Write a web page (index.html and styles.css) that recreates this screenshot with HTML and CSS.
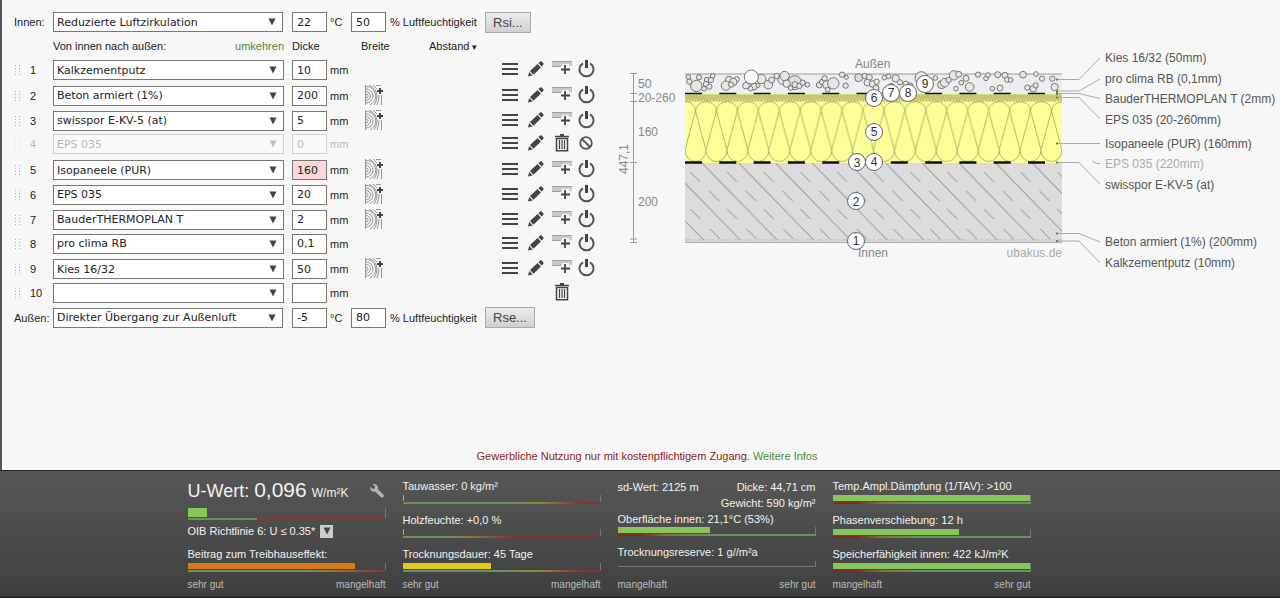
FILE: index.html
```html
<!DOCTYPE html>
<html lang="de">
<head>
<meta charset="utf-8">
<title>U-Wert-Rechner</title>
<link rel="stylesheet" href="styles.css">
</head>
<body>
<svg class="sprite" aria-hidden="true">
  <symbol id="i-grip" viewBox="0 0 8 12"><g fill="#aaa"><path d="M1 1h1v1H1zM1 4h1v1H1zM1 7h1v1H1zM1 10h1v1H1zM5 1h1v1H5zM5 4h1v1H5zM5 7h1v1H5zM5 10h1v1H5z"/></g></symbol>
  <symbol id="i-arrow" viewBox="0 0 8 8"><path d="M.5 .5h7L4 7.5z" fill="#444"/></symbol>
  <symbol id="i-wood" viewBox="0 0 18 20"><g fill="none" stroke="#8a8a8a" stroke-width=".9"><path d="M.5 0v20"/><circle cx="1" cy="11" r="2"/><path d="M1 6.500a4.500 4.500 0 0 1 0 9M1 4a7 7 0 0 1 0 14M1 1.500a9.500 9.500 0 0 1 6 17L5 20M4 0q8 4 8 11 0 5-3 9M8 0l4 4M14 10q0 6-2 10M16.500 10v10M11 .5h5"/></g><path d="M14 3h2v2h2v2h-2v2h-2V7h-2V5h2z" fill="#444"/></symbol>
  <symbol id="i-menu" viewBox="0 0 16 16"><path d="M0 2h16v2H0zM0 7h16v2H0zM0 12h16v2H0z" fill="#444"/></symbol>
  <symbol id="i-pencil" viewBox="0 0 16 16"><path d="M0 15.500l1.200-4.600 3.500 3.500zM2 10l7.500-7 3.400 3.400-7.400 7.300zM10.400 2.200l1.800-1.700Q13 0 13.700.6l1.600 1.600q.7.8 0 1.500l-1.600 1.700z" fill="#444"/></symbol>
  <symbol id="i-add" viewBox="0 0 20 18"><path d="M0 1h20v5h-3V4h-7v2H0z" fill="#c8c8c8"/><path d="M0 1.500h20M0 6.500h9" stroke="#a0a0a0" fill="none"/><path d="M13 5v9M9 9.500h9" stroke="#444" stroke-width="1.800"/></symbol>
  <symbol id="i-power" viewBox="0 0 16 18"><path d="M4.500 3.300a7 7 0 1 0 7 0" fill="none" stroke="#555" stroke-width="2"/><path d="M6.500 0h3v8h-3z" fill="#444"/></symbol>
  <symbol id="i-trash" viewBox="0 0 14 18"><g fill="none" stroke="#444"><path d="M0 2.500h14" stroke-width="1.500"/><path d="M5 1h4" stroke-width="2"/><path d="M1.500 4.500h11v12.300h-11z" stroke-width="1.500"/><path d="M4.500 6v9M7 6v9M9.500 6v9" stroke-width="1.200"/></g></symbol>
  <symbol id="i-block" viewBox="0 0 14 14"><g fill="none" stroke="#555" stroke-width="1.800"><circle cx="7" cy="7" r="5.800"/><path d="M3 3l8 8"/></g></symbol>
</svg>

<main class="main">
  <div class="workspace">
    <form class="editor">
      <div class="climate">
        <label class="climate-name" for="in-mode">Innen:</label>
        <span class="pick"><select id="in-mode"><option>Reduzierte Luftzirkulation</option></select><svg class="arrow"><use href="#i-arrow"/></svg></span>
        <input class="num" id="in-t" value="22" aria-label="Temperatur innen"><label class="unit-c" for="in-t">°C</label>
        <input class="num" id="in-h" value="50"><label class="unit-h" for="in-h">% Luftfeuchtigkeit</label>
        <button type="button" class="btn">Rsi...</button>
      </div>
      <div class="heads">
        <span class="h-name">Von innen nach außen: <a href="#umkehren">umkehren</a></span>
        <span class="h-thick">Dicke</span><span class="h-width">Breite</span><span class="h-dist">Abstand <small>▾</small></span>
      </div>
      <div class="layers">
        <div class="layer"><span class="lead"><svg class="grip"><use href="#i-grip"/></svg>1</span><span class="pick"><select aria-label="Schicht 1"><option>Kalkzementputz</option></select><svg class="arrow"><use href="#i-arrow"/></svg></span><input class="num" id="d1" value="10"><label for="d1">mm</label>
          <button type="button" class="ic c-menu" aria-label="Menü"><svg><use href="#i-menu"/></svg></button><button type="button" class="ic c-pen" aria-label="Bearbeiten"><svg><use href="#i-pencil"/></svg></button><button type="button" class="ic c-add" aria-label="Einfügen"><svg><use href="#i-add"/></svg></button><button type="button" class="ic c-pow" aria-label="Ein/Aus"><svg><use href="#i-power"/></svg></button></div>
        <div class="layer"><span class="lead"><svg class="grip"><use href="#i-grip"/></svg>2</span><span class="pick"><select aria-label="Schicht 2"><option>Beton armiert (1%)</option></select><svg class="arrow"><use href="#i-arrow"/></svg></span><input class="num" id="d2" value="200"><label for="d2">mm</label><button type="button" class="ic c-wood" aria-label="Balken"><svg><use href="#i-wood"/></svg></button>
          <button type="button" class="ic c-menu" aria-label="Menü"><svg><use href="#i-menu"/></svg></button><button type="button" class="ic c-pen" aria-label="Bearbeiten"><svg><use href="#i-pencil"/></svg></button><button type="button" class="ic c-add" aria-label="Einfügen"><svg><use href="#i-add"/></svg></button><button type="button" class="ic c-pow" aria-label="Ein/Aus"><svg><use href="#i-power"/></svg></button></div>
        <div class="layer"><span class="lead"><svg class="grip"><use href="#i-grip"/></svg>3</span><span class="pick"><select aria-label="Schicht 3"><option>swisspor E-KV-5 (at)</option></select><svg class="arrow"><use href="#i-arrow"/></svg></span><input class="num" id="d3" value="5"><label for="d3">mm</label><button type="button" class="ic c-wood" aria-label="Balken"><svg><use href="#i-wood"/></svg></button>
          <button type="button" class="ic c-menu" aria-label="Menü"><svg><use href="#i-menu"/></svg></button><button type="button" class="ic c-pen" aria-label="Bearbeiten"><svg><use href="#i-pencil"/></svg></button><button type="button" class="ic c-add" aria-label="Einfügen"><svg><use href="#i-add"/></svg></button><button type="button" class="ic c-pow" aria-label="Ein/Aus"><svg><use href="#i-power"/></svg></button></div>
        <div class="layer off"><span class="lead"><svg class="grip"><use href="#i-grip"/></svg>4</span><span class="pick"><select aria-label="Schicht 4"><option>EPS 035</option></select><svg class="arrow"><use href="#i-arrow"/></svg></span><input class="num" id="d4" value="0"><label for="d4">mm</label>
          <button type="button" class="ic c-menu" aria-label="Menü"><svg><use href="#i-menu"/></svg></button><button type="button" class="ic c-pen" aria-label="Bearbeiten"><svg><use href="#i-pencil"/></svg></button><button type="button" class="ic c-trash" aria-label="Löschen"><svg><use href="#i-trash"/></svg></button><button type="button" class="ic c-block" aria-label="Ein/Aus"><svg><use href="#i-block"/></svg></button></div>
        <div class="layer"><span class="lead"><svg class="grip"><use href="#i-grip"/></svg>5</span><span class="pick"><select aria-label="Schicht 5"><option>Isopaneele (PUR)</option></select><svg class="arrow"><use href="#i-arrow"/></svg></span><input class="num warn" id="d5" value="160"><label for="d5">mm</label><button type="button" class="ic c-wood" aria-label="Balken"><svg><use href="#i-wood"/></svg></button>
          <button type="button" class="ic c-menu" aria-label="Menü"><svg><use href="#i-menu"/></svg></button><button type="button" class="ic c-pen" aria-label="Bearbeiten"><svg><use href="#i-pencil"/></svg></button><button type="button" class="ic c-add" aria-label="Einfügen"><svg><use href="#i-add"/></svg></button><button type="button" class="ic c-pow" aria-label="Ein/Aus"><svg><use href="#i-power"/></svg></button></div>
        <div class="layer"><span class="lead"><svg class="grip"><use href="#i-grip"/></svg>6</span><span class="pick"><select aria-label="Schicht 6"><option>EPS 035</option></select><svg class="arrow"><use href="#i-arrow"/></svg></span><input class="num" id="d6" value="20"><label for="d6">mm</label><button type="button" class="ic c-wood" aria-label="Balken"><svg><use href="#i-wood"/></svg></button>
          <button type="button" class="ic c-menu" aria-label="Menü"><svg><use href="#i-menu"/></svg></button><button type="button" class="ic c-pen" aria-label="Bearbeiten"><svg><use href="#i-pencil"/></svg></button><button type="button" class="ic c-add" aria-label="Einfügen"><svg><use href="#i-add"/></svg></button><button type="button" class="ic c-pow" aria-label="Ein/Aus"><svg><use href="#i-power"/></svg></button></div>
        <div class="layer"><span class="lead"><svg class="grip"><use href="#i-grip"/></svg>7</span><span class="pick"><select aria-label="Schicht 7"><option>BauderTHERMOPLAN T</option></select><svg class="arrow"><use href="#i-arrow"/></svg></span><input class="num" id="d7" value="2"><label for="d7">mm</label><button type="button" class="ic c-wood" aria-label="Balken"><svg><use href="#i-wood"/></svg></button>
          <button type="button" class="ic c-menu" aria-label="Menü"><svg><use href="#i-menu"/></svg></button><button type="button" class="ic c-pen" aria-label="Bearbeiten"><svg><use href="#i-pencil"/></svg></button><button type="button" class="ic c-add" aria-label="Einfügen"><svg><use href="#i-add"/></svg></button><button type="button" class="ic c-pow" aria-label="Ein/Aus"><svg><use href="#i-power"/></svg></button></div>
        <div class="layer"><span class="lead"><svg class="grip"><use href="#i-grip"/></svg>8</span><span class="pick"><select aria-label="Schicht 8"><option>pro clima RB</option></select><svg class="arrow"><use href="#i-arrow"/></svg></span><input class="num" id="d8" value="0,1"><label for="d8">mm</label>
          <button type="button" class="ic c-menu" aria-label="Menü"><svg><use href="#i-menu"/></svg></button><button type="button" class="ic c-pen" aria-label="Bearbeiten"><svg><use href="#i-pencil"/></svg></button><button type="button" class="ic c-add" aria-label="Einfügen"><svg><use href="#i-add"/></svg></button><button type="button" class="ic c-pow" aria-label="Ein/Aus"><svg><use href="#i-power"/></svg></button></div>
        <div class="layer"><span class="lead"><svg class="grip"><use href="#i-grip"/></svg>9</span><span class="pick"><select aria-label="Schicht 9"><option>Kies 16/32</option></select><svg class="arrow"><use href="#i-arrow"/></svg></span><input class="num" id="d9" value="50"><label for="d9">mm</label><button type="button" class="ic c-wood" aria-label="Balken"><svg><use href="#i-wood"/></svg></button>
          <button type="button" class="ic c-menu" aria-label="Menü"><svg><use href="#i-menu"/></svg></button><button type="button" class="ic c-pen" aria-label="Bearbeiten"><svg><use href="#i-pencil"/></svg></button><button type="button" class="ic c-add" aria-label="Einfügen"><svg><use href="#i-add"/></svg></button><button type="button" class="ic c-pow" aria-label="Ein/Aus"><svg><use href="#i-power"/></svg></button></div>
        <div class="layer"><span class="lead"><svg class="grip"><use href="#i-grip"/></svg>10</span><span class="pick"><select aria-label="Schicht 10"><option></option></select><svg class="arrow"><use href="#i-arrow"/></svg></span><input class="num" id="d10" value=""><label for="d10">mm</label>
          <button type="button" class="ic c-trash" aria-label="Löschen"><svg><use href="#i-trash"/></svg></button></div>
        <div class="climate">
          <label class="climate-name" for="out-mode">Außen:</label>
          <span class="pick"><select id="out-mode"><option>Direkter Übergang zur Außenluft</option></select><svg class="arrow"><use href="#i-arrow"/></svg></span>
          <input class="num" id="out-t" value="-5" aria-label="Temperatur außen"><label class="unit-c" for="out-t">°C</label>
          <input class="num" id="out-h" value="80"><label class="unit-h" for="out-h">% Luftfeuchtigkeit</label>
          <button type="button" class="btn">Rse...</button>
        </div>
      </div>
    </form>

    <svg class="section" viewBox="614 50 666 230" role="img" aria-label="Schichtaufbau">
      <defs>
        <pattern id="p-fine" patternUnits="userSpaceOnUse" x="685" y="94" width="3" height="8"><path d="M0 7.500L.8 .5L1.500 7.500L2.300 .5L3 7.500" fill="none" stroke="#a5a555" stroke-width=".5"/></pattern>
        <pattern id="p-wool" patternUnits="userSpaceOnUse" x="685" y="101" width="20.944" height="62"><g fill="none" stroke="#a3a35a" stroke-width=".8"><path d="M0 49L10.470 10L20.944 49A10.470 11.500 0 0 1 0 49M-10.470 10A10.470 9.500 0 0 1 10.470 10A10.470 9.500 0 0 1 31.400 10"/></g></pattern>
        <pattern id="p-conc" patternUnits="userSpaceOnUse" x="685" y="163" width="36.700" height="78"><g stroke="#999" stroke-width="1"><path d="M17 0L93 78M-19.700 0L56.300 78M-56.400 0L19.600 78M-93.100 0L-17 78"/><path d="M5.300 9L15.300 19M24.300 28L34.300 38M5.300 46L15.300 56M25 66L35 76"/></g></pattern>
      </defs>
      <g font-family="Liberation Sans, Arial, sans-serif" font-size="12" fill="#888">
        <text x="855" y="68">Außen</text>
        <rect x="685" y="74" width="377" height="20" fill="#eee"/>
        <path d="M685 74H1062" stroke="#999"/>
        <g transform="translate(680 64) scale(.33333)" fill="#e6e6e6" stroke="#666" stroke-width="2.600">
          <circle cx="25" cy="39" r="7"/><circle cx="28" cy="53" r="8"/><circle cx="57" cy="40" r="8"/><circle cx="49" cy="66" r="17"/><circle cx="81" cy="48" r="8"/><circle cx="78" cy="60" r="8"/><circle cx="98" cy="36" r="7"/><circle cx="88" cy="68" r="8"/><circle cx="72" cy="74" r="7"/><circle cx="93" cy="48" r="8"/>
          <circle cx="147" cy="48" r="11"/><circle cx="170" cy="46" r="8"/><circle cx="160" cy="54" r="11"/><circle cx="138" cy="65" r="14"/><circle cx="153" cy="62" r="8"/><circle cx="198" cy="65" r="10"/><circle cx="222" cy="68" r="10"/><circle cx="212" cy="74" r="7"/><circle cx="234" cy="64" r="6"/><circle cx="244" cy="45" r="14"/><circle cx="214" cy="39" r="21" fill="#fff"/>
          <circle cx="265" cy="62" r="13"/><circle cx="275" cy="48" r="9"/><circle cx="290" cy="36" r="8"/><circle cx="307" cy="48" r="13"/><circle cx="314" cy="36" r="14"/><circle cx="344" cy="56" r="21" fill="#ddd"/><circle cx="320" cy="59" r="11"/><circle cx="345" cy="62" r="9"/><circle cx="358" cy="66" r="8"/><circle cx="368" cy="56" r="8"/><circle cx="382" cy="62" r="7"/><circle cx="332" cy="72" r="7"/>
          <circle cx="418" cy="63" r="9"/><circle cx="426" cy="54" r="8"/><circle cx="434" cy="43" r="8"/><circle cx="440" cy="62" r="12"/><circle cx="443" cy="77" r="7"/><circle cx="460" cy="58" r="17"/><circle cx="486" cy="32" r="8"/><circle cx="499" cy="40" r="6"/><circle cx="497" cy="65" r="8"/><circle cx="536" cy="41" r="12" fill="#ddd"/><circle cx="554" cy="36" r="8"/><circle cx="568" cy="40" r="9"/><circle cx="562" cy="56" r="10"/><circle cx="578" cy="60" r="10"/><circle cx="590" cy="53" r="8"/><circle cx="588" cy="72" r="9"/><circle cx="613" cy="41" r="7"/><circle cx="626" cy="37" r="7"/><circle cx="647" cy="43" r="11"/><circle cx="634" cy="66" r="8"/><circle cx="660" cy="55" r="8"/><circle cx="678" cy="60" r="9"/><circle cx="690" cy="66" r="9"/><circle cx="724" cy="42" r="19"/>
          <circle cx="766" cy="42" r="7"/><circle cx="785" cy="62" r="12"/><circle cx="794" cy="56" r="13"/><circle cx="806" cy="48" r="8"/><circle cx="822" cy="34" r="14"/><circle cx="836" cy="31" r="9"/><circle cx="828" cy="74" r="7"/><circle cx="844" cy="56" r="7"/><circle cx="858" cy="43" r="9"/><circle cx="869" cy="69" r="13"/><circle cx="894" cy="32" r="8"/><circle cx="918" cy="43" r="7"/><circle cx="924" cy="33" r="7"/><circle cx="937" cy="74" r="7"/><circle cx="960" cy="72" r="9"/><circle cx="953" cy="32" r="9"/><circle cx="975" cy="34" r="9"/><circle cx="982" cy="47" r="8"/><circle cx="992" cy="48" r="7"/><circle cx="1029" cy="32" r="10"/><circle cx="1042" cy="71" r="8"/><circle cx="1060" cy="74" r="10"/><circle cx="1067" cy="64" r="8"/><circle cx="1068" cy="30" r="7"/><circle cx="1086" cy="44" r="8"/><circle cx="1117" cy="44" r="8"/><circle cx="1124" cy="69" r="11"/>
        </g>
        <rect x="685" y="94" width="377" height="69" fill="#ffff99"/>
        <rect x="685" y="94" width="377" height="8" fill="#f0f090"/>
        <rect x="685" y="94" width="377" height="8" fill="url(#p-fine)"/>
        <rect x="685" y="101" width="377" height="62" fill="url(#p-wool)"/>
        <rect x="685" y="163" width="377" height="80" fill="#dcdcdc"/>
        <rect x="685" y="163" width="377" height="77" fill="url(#p-conc)"/>
        <path d="M685 240H1062" stroke="#aaa" stroke-dasharray="6 2 2 2" stroke-width=".7"/>
        <path d="M685 242.500H1062" stroke="#aaa"/>
        <path d="M685 93.500H1062" stroke="#111" stroke-width="1.500" stroke-dasharray="17 17.300"/>
        <path d="M685 162.500H1062" stroke="#111" stroke-width="2.400" stroke-dasharray="17 17.300"/>
        <path d="M633.500 73.500V242M630 73.500H637M630 93.500H637M630 101.500H637M630 162.500H637M630 239H637M630 242.500H637" stroke="#999" fill="none"/>
        <text x="638" y="88">50</text><text x="638" y="102">20-260</text><text x="638" y="136">160</text><text x="638" y="206">200</text>
        <text transform="translate(628 174) rotate(-90)">447,1</text>
        <text x="858" y="257">Innen</text><text x="1062" y="257" text-anchor="end" fill="#aaa">ubakus.de</text>
        <g fill="#fff" stroke="#666"><circle cx="925" cy="84" r="8.500"/><circle cx="908" cy="93" r="8.500"/><circle cx="891" cy="93" r="8.500"/><circle cx="874" cy="98" r="8.500"/><circle cx="874" cy="132" r="8.500"/><circle cx="874" cy="162" r="8.500"/><circle cx="857" cy="162" r="8.500"/><circle cx="856" cy="201" r="8.500"/><circle cx="856" cy="241" r="8.500"/></g>
        <g fill="#333" text-anchor="middle"><text x="925" y="88">9</text><text x="908" y="97">8</text><text x="891" y="97">7</text><text x="874" y="102">6</text><text x="874" y="136">5</text><text x="874" y="166">4</text><text x="857" y="167">3</text><text x="856" y="206">2</text><text x="856" y="245">1</text></g>
        <g fill="none" stroke="#aaa"><path d="M1056 79.500H1079L1100 58M1056 91H1079L1100 79M1056 93.500H1079L1100 98.500M1056 97.500H1079L1100 119M1056 143.500H1100M1056 162.500H1079L1100 184M1056 233.500H1079L1100 242M1056 241H1079L1100 263M1092 161L1097 163.500H1100"/></g>
        <path d="M1056 78.500h2v2h-2zM1056 90h2v5h-2zM1056 96.500h2v2h-2zM1056 142.500h2v2h-2zM1056 161.500h2v2h-2zM1056 232.500h2v2h-2zM1056 240h2v2h-2z" fill="#777"/>
        <g fill="#555"><text x="1105" y="62">Kies 16/32 (50mm)</text><text x="1105" y="83">pro clima RB (0,1mm)</text><text x="1105" y="103">BauderTHERMOPLAN T (2mm)</text><text x="1105" y="124">EPS 035 (20-260mm)</text><text x="1105" y="148">Isopaneele (PUR) (160mm)</text><text x="1105" y="168" fill="#aaa">EPS 035 (220mm)</text><text x="1105" y="189">swisspor E-KV-5 (at)</text><text x="1105" y="246">Beton armiert (1%) (200mm)</text><text x="1105" y="267">Kalkzementputz (10mm)</text></g>
      </g>
    </svg>
  </div>
  <p class="notice">Gewerbliche Nutzung nur mit kostenpflichtigem Zugang. <a href="#infos">Weitere Infos</a></p>
</main>

<footer class="results">
  <section class="col">
    <div class="uvalue"><span class="u-label">U-Wert: <b>0,096</b> <small>W/m²K</small></span><svg class="wrench" viewBox="0 0 14 14"><path d="M.3 2.800L2.600 5l2-.5.5-2L2.800.3Q5.300-.4 7 1.400q1.400 1.500.7 3.600l5.800 5.700q.8 1.300-.2 2.300t-2.400.3L5.200 7.600Q3 8.200 1.400 6.800-.3 5 .3 2.800z" fill="#b5b5b5"/></svg></div>
    <div class="meter tall"><div class="track"><div class="fill green" style="width:10%"></div></div><div class="scale s-u"></div></div>
    <div class="target"><label for="norm">OIB Richtlinie 6: U ≤ 0.35*</label><button type="button" id="norm" class="drop" aria-label="Richtlinie wählen"><svg><use href="#i-arrow"/></svg></button></div>
    <div class="meter"><div class="cap">Beitrag zum Treibhauseffekt:</div><div class="track"><div class="fill orange" style="width:85%"></div></div><div class="scale s-late"></div></div>
    <div class="ends"><span>sehr gut</span><span>mangelhaft</span></div>
  </section>
  <section class="col">
    <div class="meter"><div class="cap">Tauwasser: 0 kg/m²</div><div class="track"><div class="fill green" style="width:1%"></div></div><div class="scale s-mid"></div></div>
    <div class="meter"><div class="cap">Holzfeuchte: +0,0 %</div><div class="track"><div class="fill green" style="width:1%"></div></div><div class="scale s-early"></div></div>
    <div class="meter"><div class="cap">Trocknungsdauer: 45 Tage</div><div class="track"><div class="fill yellow" style="width:45%"></div></div><div class="scale s-mid"></div></div>
    <div class="ends"><span>sehr gut</span><span>mangelhaft</span></div>
  </section>
  <section class="col">
    <div class="facts"><span>sd-Wert: 2125 m</span><span class="right">Dicke: 44,71 cm<br>Gewicht: 590 kg/m²</span></div>
    <div class="meter surface"><div class="cap">Oberfläche innen: 21,1°C (53%)</div><div class="track"><div class="fill green" style="width:47%"></div></div><div class="scale s-rise"></div></div>
    <div class="meter reserve"><div class="cap">Trocknungsreserve: 1 g//m²a</div><div class="track"></div></div>
    <div class="ends"><span>mangelhaft</span><span>sehr gut</span></div>
  </section>
  <section class="col">
    <div class="meter"><div class="cap">Temp.Ampl.Dämpfung (1/TAV): &gt;100</div><div class="track"><div class="fill green" style="width:100%"></div></div><div class="scale s-rise"></div></div>
    <div class="meter"><div class="cap">Phasenverschiebung: 12 h</div><div class="track"><div class="fill green" style="width:64%"></div></div><div class="scale s-rise"></div></div>
    <div class="meter"><div class="cap">Speicherfähigkeit innen: 422 kJ/m²K</div><div class="track"><div class="fill green" style="width:100%"></div></div><div class="scale s-rise"></div></div>
    <div class="ends"><span>mangelhaft</span><span>sehr gut</span></div>
  </section>
</footer>
</body>
</html>
```
FILE: styles.css
```css
* { box-sizing: border-box; }
body {
  margin: 0;
  min-height: 100vh;
  display: flex;
  flex-direction: column;
  background: #f7f7f7;
  color: #222;
  font: 11px/14px "Liberation Sans", Arial, sans-serif;
}
a { color: #4b8b3b; text-decoration: none; }
button { font: inherit; cursor: pointer; }
.sprite { display: none; }

.main {
  flex: 1;
  display: flex;
  flex-direction: column;
  justify-content: space-between;
  border-left: 2px solid #555;
}
.workspace { display: flex; align-items: flex-start; padding: 12px 0 0 12px; }
.editor { flex: none; width: 600px; }
.section { flex: 1; min-width: 0; margin-top: 38px; }

.climate { display: flex; align-items: center; height: 20px; }
.climate-name { width: 39px; white-space: nowrap; }
.climate .pick { width: 230px; margin-right: 9px; }
.unit-c { width: 21px; margin-left: 3px; }
.unit-h { width: 95px; margin-left: 4px; white-space: nowrap; }
.btn {
  height: 21px;
  padding: 0 7px;
  border: 1px solid #aaa;
  background: linear-gradient(#ececec, #d0d0d0);
  color: #444;
  font-size: 13px;
  line-height: 17px;
}

.pick { display: grid; align-items: center; width: 231px; }
.pick > * { grid-area: 1 / 1; }
.arrow { justify-self: end; width: 8px; height: 8px; margin-right: 7px; pointer-events: none; }
select, .num {
  appearance: none;
  height: 20px;
  margin: 0;
  padding: 0 3px;
  border: 1px solid #777;
  border-radius: 0;
  background: #fff;
  color: #222;
  font: 11px "DejaVu Sans", Verdana, sans-serif;
}
select { width: 100%; }
.num { width: 35px; padding: 0 4px; }
.num.warn { background: #fdd8d8; }

.heads { display: flex; margin: 7px 0 6px; padding-left: 39px; }
.h-name { display: flex; justify-content: space-between; width: 231px; margin-right: 8px; }
.h-thick { width: 69px; }
.h-width { width: 68px; }

.layers { display: flex; flex-direction: column; justify-content: space-between; min-height: 268px; }
.layer {
  display: grid;
  grid-template-columns: 39px 239px 38px 35px 137px 26px 24px 26px 17px;
  align-items: center;
  height: 20px;
}
.layer > * { grid-row: 1; }
.lead { display: flex; align-items: center; gap: 8px; }
.grip { width: 8px; height: 12px; }
.ic { padding: 0 0 2px; border: 0; background: none; display: flex; }
.c-wood { grid-column: 5; } .c-wood svg { width: 18px; height: 20px; }
.c-menu { grid-column: 6; } .c-menu svg { width: 16px; height: 16px; }
.c-pen { grid-column: 7; } .c-pen svg { width: 16px; height: 16px; }
.c-add { grid-column: 8; } .c-add svg { width: 20px; height: 18px; }
.c-pow { grid-column: 9; } .c-pow svg { width: 17px; height: 18px; }
.c-trash { grid-column: 8; padding-left: 3px; } .c-trash svg { width: 14px; height: 18px; }
.c-block { grid-column: 9; padding-left: 1px; } .c-block svg { width: 14px; height: 14px; }
.off .lead, .off .pick, .off .num, .off label { opacity: 0.3; }

.notice { margin: 0; padding: 0 0 7px 12px; text-align: center; color: #8b1c1c; }

.results {
  display: grid;
  grid-template-columns: repeat(4, 198px);
  justify-content: center;
  gap: 17px;
  padding: 8px 62px 5px 0;
  border-top: 1px solid #222;
  border-bottom: 1px solid #111;
  background: linear-gradient(#575757, #3f3f3f);
  color: #f2f2f2;
}
.col { display: flex; flex-direction: column; }
.meter { margin-bottom: 9px; }
.meter:nth-last-child(2) { margin-bottom: 6px; }
.cap { margin-bottom: 2px; white-space: nowrap; }
.track { height: 7px; border-right: 1px solid #777; }
.fill { height: 6px; }
.green { background: #86c65c; }
.orange { background: #d97a16; }
.yellow { background: #ddcc1a; }
.scale { height: 2px; }
.s-u { background: linear-gradient(90deg, #6d8f62 35%, #8a3636 35%); }
.s-late { background: linear-gradient(90deg, #6d8f62 60%, #8a7a36 75%, #8a3030); }
.s-mid { background: linear-gradient(90deg, #6d8f62 50%, #95852f 70%, #8a3030 90%); }
.s-early { background: linear-gradient(90deg, #6d8f62 25%, #95752f 35%, #8a3030 55%); }
.s-rise { background: linear-gradient(90deg, #8a2525 12%, #8a7036 25%, #6d8f62 45%); }

.uvalue { display: flex; justify-content: space-between; align-items: center; height: 24px; font-size: 18px; line-height: 24px; }
.u-label { white-space: nowrap; }
.uvalue b { font-size: 21px; font-weight: 400; }
.uvalue small { font-size: 12px; }
.wrench { width: 14px; height: 14px; margin-right: 2px; }
.tall { margin: 5px 0 4px; }
.tall .track { height: 10px; }
.tall .fill { height: 9px; }
.target { display: flex; align-items: center; gap: 5px; height: 14px; margin-bottom: 9px; white-space: nowrap; }
.drop { display: grid; place-items: center; width: 13px; height: 13px; padding: 0; border: 0; background: #ccc; }
.drop svg { width: 8px; height: 8px; }

.facts { display: flex; justify-content: space-between; line-height: 16px; margin: 0 0 1px; }
.right { text-align: right; }
.surface .cap { margin-bottom: 1px; }
.reserve .track { height: 6px; border-bottom: 1px solid #777; }
.ends { display: flex; justify-content: space-between; margin-top: auto; font-size: 10px; color: #bbb; }
```
